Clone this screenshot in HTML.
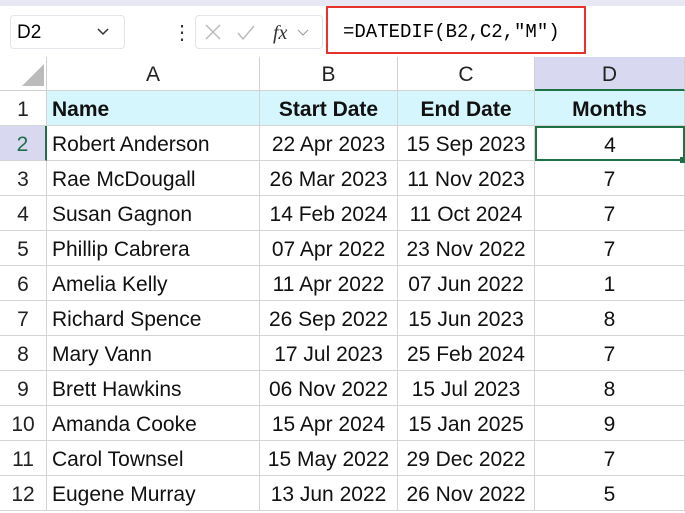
<!DOCTYPE html><html><head><style>
body{margin:0;width:685px;height:513px;overflow:hidden;background:#fff;font-family:"Liberation Sans",sans-serif;position:relative}
.a{position:absolute;box-sizing:border-box}
.g{position:absolute;left:0;top:91px;display:grid;grid-template-columns:47px 213px 138px 137px 150px;grid-auto-rows:35px}
.g div{border-right:1px solid #d4d4d4;border-bottom:1px solid #d4d4d4;font-size:21px;color:#111;white-space:nowrap;overflow:hidden;line-height:34px;padding:2px 5px 0;box-sizing:border-box}
.g .r{text-align:center;color:#222;padding:2px 0 0}
.c{text-align:center}
.f{background:#d6f6fd;font-weight:bold}
.hd{position:absolute;top:57px;height:34px;line-height:36px;text-align:center;font-size:21px;color:#222;border-right:1px solid #d0d0d0;border-bottom:1px solid #d0d0d0;box-sizing:border-box}
</style></head><body>
<div class="a" style="left:0;top:0;width:685px;height:6px;background:#e8e8f4"></div>
<div class="a" style="left:10px;top:15px;width:115px;height:34px;border:1px solid #e4e4ea;border-radius:4px;font-size:19px;padding:6px 0 0 6px">D2</div>
<svg class="a" style="left:96px;top:26px" width="14" height="12"><path d="M2 3l5 5 5-5" stroke="#333" stroke-width="1.5" fill="none"/></svg>
<div class="a" style="left:172px;top:20px;font-size:20px;color:#333">&#8942;</div>
<div class="a" style="left:195px;top:15px;width:128px;height:34px;border:1px solid #e4e4ea;border-radius:4px"></div>
<svg class="a" style="left:200px;top:20px" width="125" height="26"><path d="M6 5l14 14M20 5L6 19" stroke="#bbb" stroke-width="1.5"/><path d="M38 13l5 6 11-13" stroke="#bbb" stroke-width="1.5" fill="none"/><text x="73" y="19" font-family="Liberation Serif" font-style="italic" font-size="20" fill="#333">fx</text><path d="M98 10l5 5 5-5" stroke="#999" fill="none"/></svg>
<div class="a" style="left:326px;top:6px;width:260px;height:48px;border:2px solid #e8322c;font-family:'Liberation Mono',monospace;font-size:19px;padding:13px 0 0 15px">=DATEDIF(B2,C2,"M")</div>
<div class="hd" style="left:0;width:47px;background:#fff"><svg width="30" height="28" style="position:absolute;left:14px;top:3px"><path d="M30 4V26H8Z" fill="#bbb"/></svg></div>
<div class="hd" style="left:47px;width:213px">A</div>
<div class="hd" style="left:260px;width:138px">B</div>
<div class="hd" style="left:398px;width:137px">C</div>
<div class="hd" style="left:535px;width:150px;background:#d8d8f0;border-bottom:2px solid #1e7145">D</div>
<div class="g">
<div class="r">1</div><div class="f">Name</div><div class="f c">Start Date</div><div class="f c">End Date</div><div class="f c">Months</div>
<div class="r" style="background:#d8d8f0;color:#1e6e4a;border-right:2px solid #1e7145">2</div><div>Robert Anderson</div><div class="c">22 Apr 2023</div><div class="c">15 Sep 2023</div><div class="c" style="border:2px solid #1e7145;line-height:31px">4</div>
<div class="r">3</div><div>Rae McDougall</div><div class="c">26 Mar 2023</div><div class="c">11 Nov 2023</div><div class="c">7</div>
<div class="r">4</div><div>Susan Gagnon</div><div class="c">14 Feb 2024</div><div class="c">11 Oct 2024</div><div class="c">7</div>
<div class="r">5</div><div>Phillip Cabrera</div><div class="c">07 Apr 2022</div><div class="c">23 Nov 2022</div><div class="c">7</div>
<div class="r">6</div><div>Amelia Kelly</div><div class="c">11 Apr 2022</div><div class="c">07 Jun 2022</div><div class="c">1</div>
<div class="r">7</div><div>Richard Spence</div><div class="c">26 Sep 2022</div><div class="c">15 Jun 2023</div><div class="c">8</div>
<div class="r">8</div><div>Mary Vann</div><div class="c">17 Jul 2023</div><div class="c">25 Feb 2024</div><div class="c">7</div>
<div class="r">9</div><div>Brett Hawkins</div><div class="c">06 Nov 2022</div><div class="c">15 Jul 2023</div><div class="c">8</div>
<div class="r">10</div><div>Amanda Cooke</div><div class="c">15 Apr 2024</div><div class="c">15 Jan 2025</div><div class="c">9</div>
<div class="r">11</div><div>Carol Townsel</div><div class="c">15 May 2022</div><div class="c">29 Dec 2022</div><div class="c">7</div>
<div class="r">12</div><div>Eugene Murray</div><div class="c">13 Jun 2022</div><div class="c">26 Nov 2022</div><div class="c">5</div>
</div>
<div class="a" style="left:680px;top:157px;width:6px;height:6px;background:#1e7145"></div>
</body></html>
